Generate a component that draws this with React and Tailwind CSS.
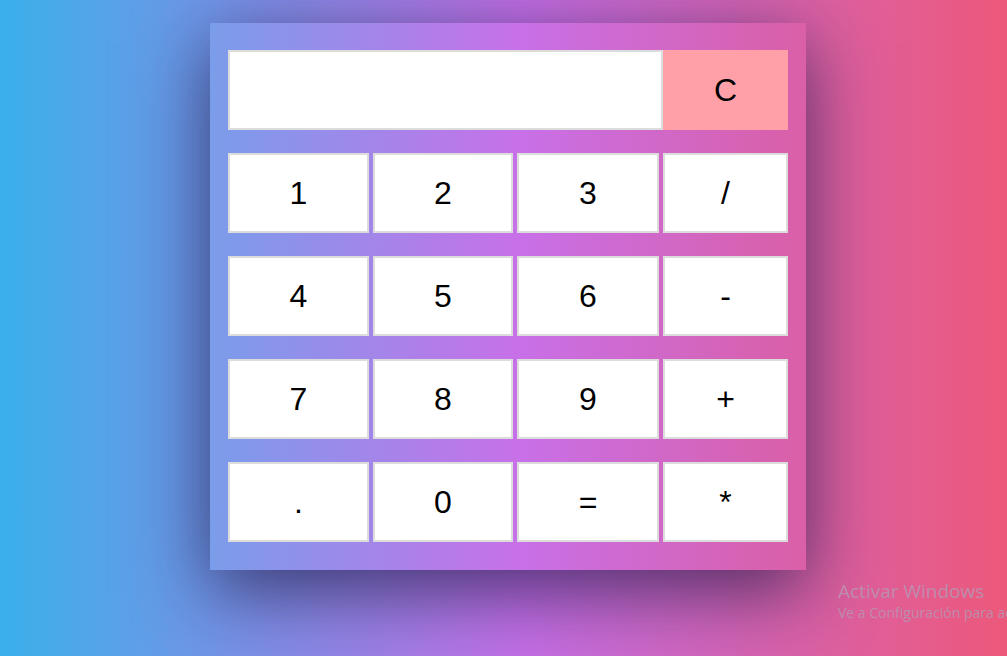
export default function App() {
  const rows = [
    ["1", "2", "3", "/"],
    ["4", "5", "6", "-"],
    ["7", "8", "9", "+"],
    [".", "0", "=", "*"],
  ];
  const btn =
    "h-[80px] bg-white border-2 border-[#dcdcdc] text-black text-[32px] flex items-center justify-center";
  return (
    <div
      className="relative w-[1007px] h-[656px] overflow-hidden bg-[linear-gradient(to_right,#3ab0ea_0%,#c46fe6_52%,#ec587a_100%)] pl-[210px] pt-[23px]"
      style={{ fontFamily: '"Liberation Sans", Arial, sans-serif' }}
    >
      <div className="w-[596px] h-[547px] bg-[linear-gradient(to_right,#7a9dea_0%,#c870e8_52%,#da5fa6_100%)] shadow-[0_20px_70px_rgba(20,20,60,0.7)] pt-[27px] px-[18px] pb-[28px] flex flex-col gap-[23px]">
        <div className="flex">
          <div className="w-[435px] h-[80px] bg-white border-2 border-[#dcdcdc]" />
          <div className="w-[125px] h-[80px] bg-[#ffa0a8] text-black text-[32px] flex items-center justify-center">
            C
          </div>
        </div>
        {rows.map((r, i) => (
          <div key={i} className="grid grid-cols-[141px_140px_142px_125px] gap-x-[4px]">
            {r.map((k) => (
              <div key={k} className={btn}>
                {k}
              </div>
            ))}
          </div>
        ))}
      </div>
      <div
        className="absolute left-[838px] top-[579px] text-[#bd8cac] whitespace-nowrap"
        style={{ fontFamily: '"Open Sans", "Noto Sans", sans-serif' }}
      >
        <div className="text-[19px] leading-[24px]">Activar Windows</div>
        <div className="text-[14px] leading-[20px]">Ve a Configuración para activar Windows.</div>
      </div>
    </div>
  );
}
